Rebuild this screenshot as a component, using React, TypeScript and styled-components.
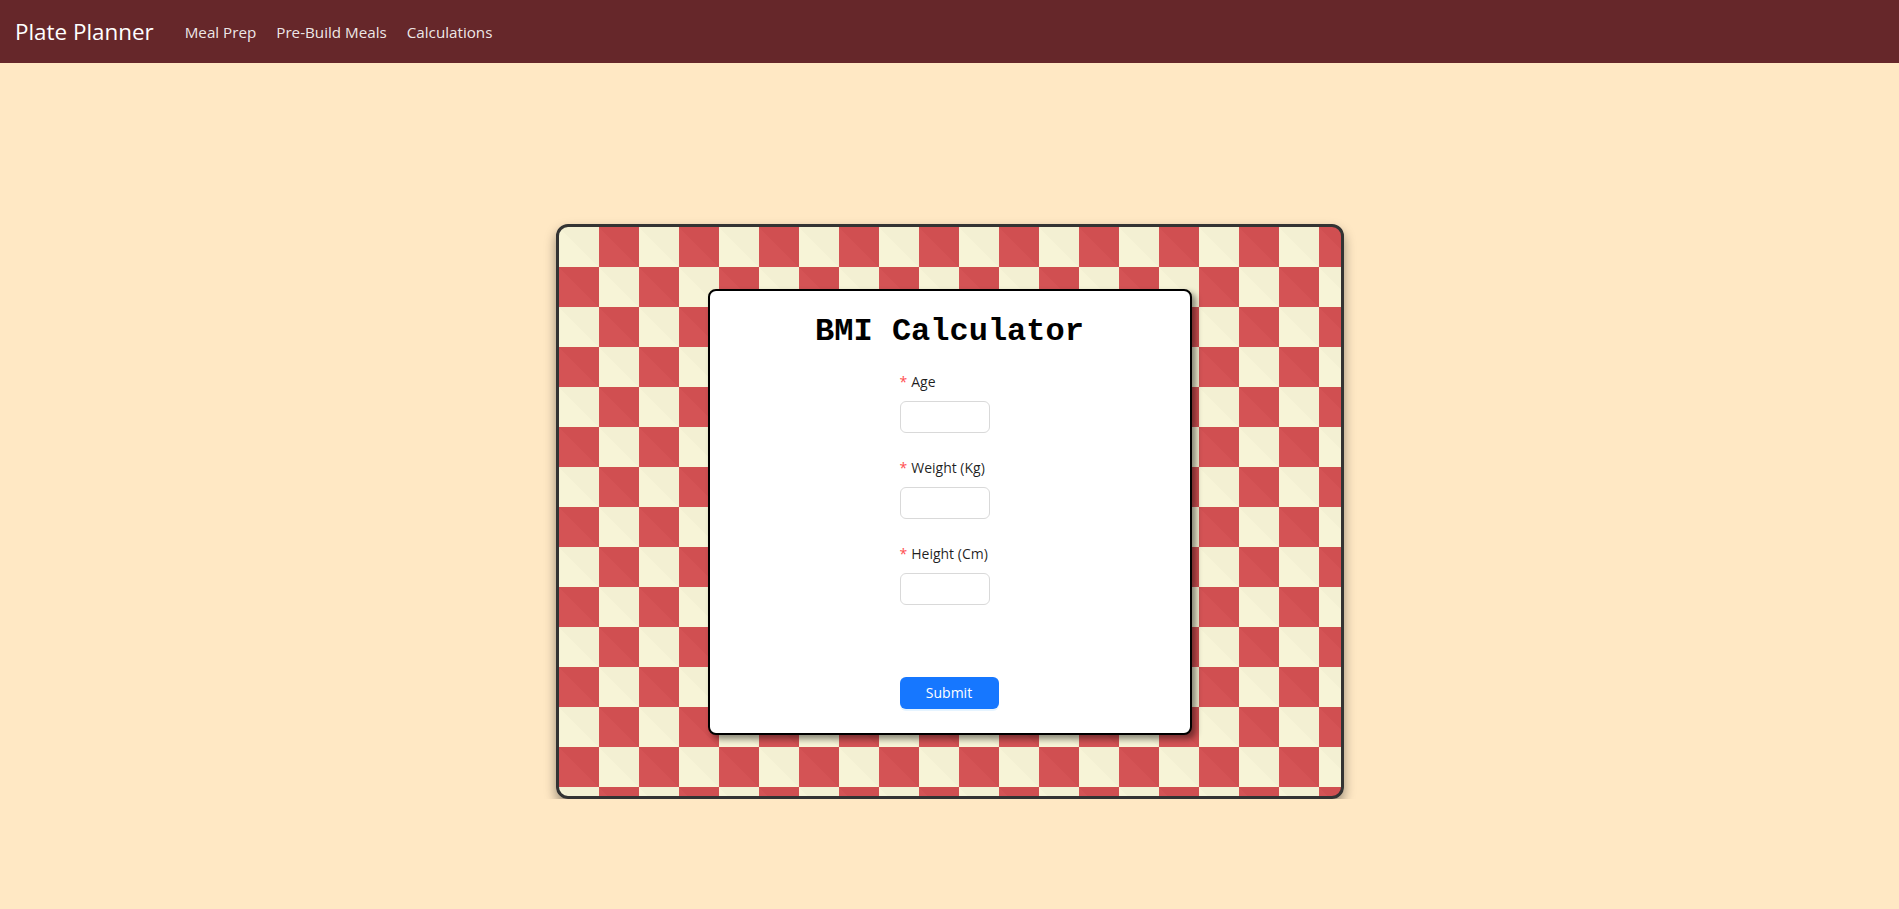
import React from 'react';
import styled, { createGlobalStyle } from 'styled-components';

const GlobalStyle = createGlobalStyle`
  html, body {
    margin: 0;
    padding: 0;
    background: #ffe8c4;
    font-family: 'Open Sans', 'Noto Sans', sans-serif;
  }
  * { box-sizing: border-box; }
`;

const NavBar = styled.nav`
  height: 63px;
  background: #66272a;
  display: flex;
  align-items: center;
  padding: 0 15px;
`;

const Brand = styled.a`
  color: #fff;
  font-size: 22.4px;
  margin-right: 31px;
  text-decoration: none;
`;

const NavLink = styled.a`
  color: rgba(255, 255, 255, 0.9);
  font-size: 15.2px;
  text-decoration: none;
  margin-right: 20px;
`;

const Main = styled.main`
  display: flex;
  justify-content: center;
  padding-top: 161px;
`;

const Board = styled.div`
  width: 788px;
  height: 575px;
  border: 3px solid #333;
  border-radius: 12px;
  box-shadow: 0 6px 12px rgba(0, 0, 0, 0.4);
  background:
    linear-gradient(45deg, rgba(255, 255, 255, 0.015) 50%, rgba(0, 0, 0, 0.015) 50%) 0 0 / 40px 40px,
    repeating-conic-gradient(#d35052 0 25%, #f7f4d6 0 50%) 0 0 / 80px 80px;
  display: flex;
  align-items: center;
  justify-content: center;
`;

const Card = styled.div`
  width: 484px;
  height: 446px;
  background: #fff;
  border: 2px solid #000;
  border-radius: 8px;
  box-shadow: 4px 4px 6px rgba(0, 0, 0, 0.45);
  display: flex;
  flex-direction: column;
  align-items: center;
`;

const Title = styled.h1`
  font-family: 'Liberation Mono', 'Courier New', monospace;
  font-weight: 700;
  font-size: 32px;
  margin: 22px 0 21px;
  color: #000;
`;

const Form = styled.form`
  width: 100px;
  display: flex;
  flex-direction: column;
`;

const Item = styled.div`
  margin-bottom: 24px;
`;

const Label = styled.label`
  display: block;
  font-size: 14px;
  line-height: 22px;
  padding-bottom: 8px;
  color: rgba(0, 0, 0, 0.88);
  font-family: 'Open Sans', sans-serif;
`;

const Star = styled.span`
  color: #ff4d4f;
  margin-right: 4px;
`;

const Input = styled.input`
  width: 90px;
  height: 32px;
  border: 1px solid #d9d9d9;
  border-radius: 6px;
  padding: 4px 11px;
  font-size: 14px;
  outline: none;
`;

const Button = styled.button`
  margin-top: 48px;
  width: 99px;
  height: 32px;
  border: none;
  border-radius: 6px;
  background: #1677ff;
  color: #fff;
  font-size: 14px;
  font-family: 'Open Sans', sans-serif;
  box-shadow: 0 2px 0 rgba(5, 145, 255, 0.1);
`;

const fields = ['Age', 'Weight (Kg)', 'Height (Cm)'];

const App = () => (
  <>
    <GlobalStyle />
    <NavBar>
      <Brand href="#">Plate Planner</Brand>
      <NavLink href="#">Meal Prep</NavLink>
      <NavLink href="#">Pre-Build Meals</NavLink>
      <NavLink href="#">Calculations</NavLink>
    </NavBar>
    <Main>
      <Board>
        <Card>
          <Title>BMI Calculator</Title>
          <Form onSubmit={(e) => e.preventDefault()}>
            {fields.map((f) => (
              <Item key={f}>
                <Label>
                  <Star>*</Star>
                  {f}
                </Label>
                <Input />
              </Item>
            ))}
            <Button type="submit">Submit</Button>
          </Form>
        </Card>
      </Board>
    </Main>
  </>
);

export default App;
